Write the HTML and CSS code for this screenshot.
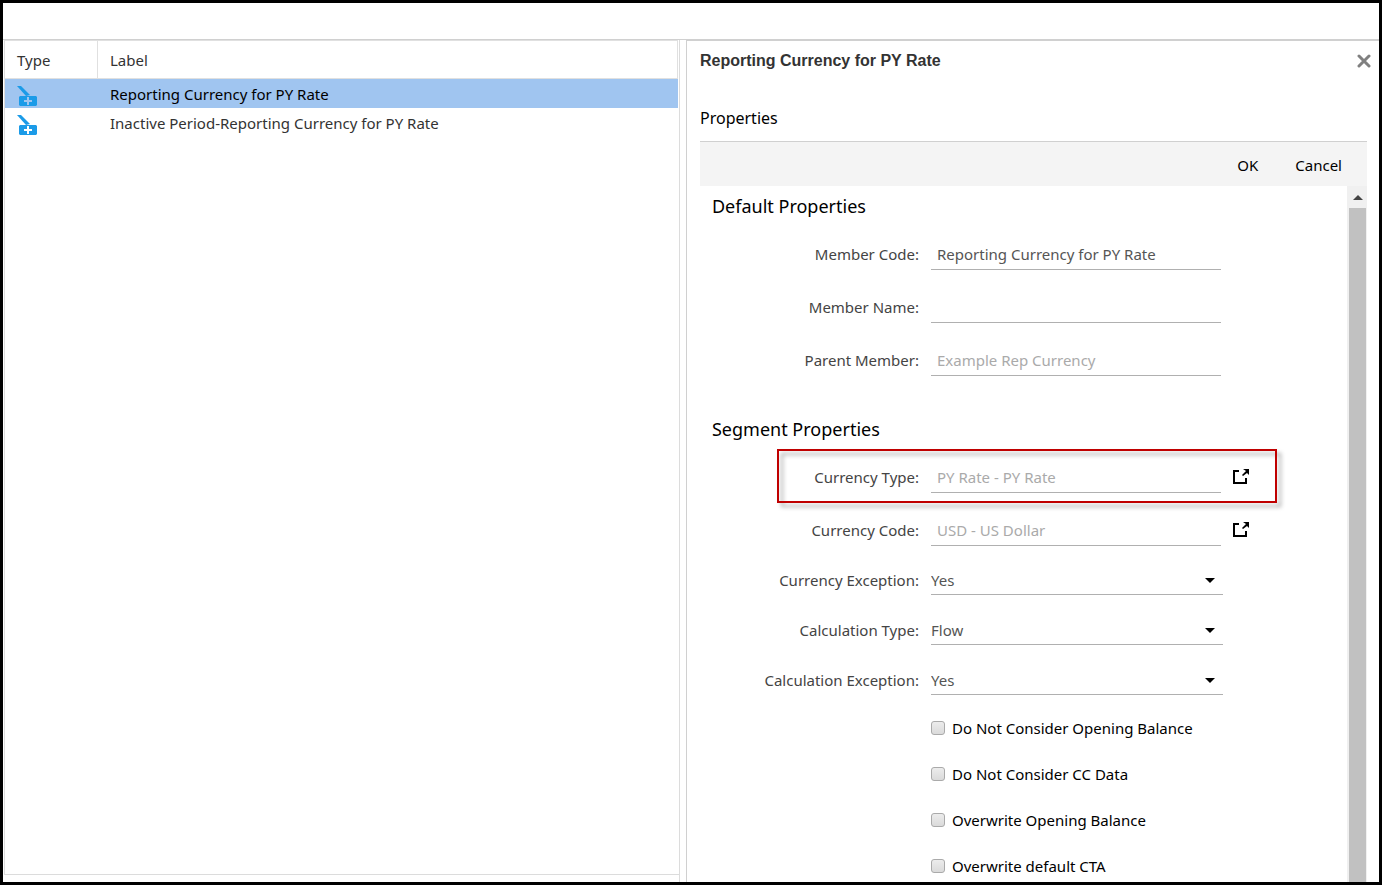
FILE: index.html
```
<!DOCTYPE html>
<html lang="en">
<head>
<meta charset="utf-8">
<title>Reporting Currency for PY Rate</title>
<link rel="stylesheet" href="styles.css">
</head>
<body>
<svg class="defs" aria-hidden="true">
  <symbol id="i-member" viewBox="0 0 20 20"><path d="M0 0h4l9 9-4 1z" fill="#1b9be8"/><path fill-rule="evenodd" d="M3 10h16l1 1v8l-1 1H3l-1-1v-8zM10 11v3H7v2h3v3h2v-3h3v-2h-3v-3z" fill="#1b9be8"/></symbol>
  <symbol id="i-open" viewBox="0 0 16 16"><path d="M6 2H1v12h12V9" fill="none" stroke="#000" stroke-width="2"/><path d="M10 0h6v6l-2-2-4 3-1-1 4-4z" fill="#000"/></symbol>
</svg>
<div class="window">
  <header class="topbar"></header>
  <main class="split">
    <section class="list">
      <div class="list-body">
        <table class="grid">
          <thead><tr><th class="type">Type</th><th>Label</th></tr></thead>
          <tbody>
            <tr class="selected"><td><svg class="member"><use href="#i-member"/></svg></td><td>Reporting Currency for PY Rate</td></tr>
            <tr><td><svg class="member"><use href="#i-member"/></svg></td><td>Inactive Period-Reporting Currency for PY Rate</td></tr>
          </tbody>
        </table>
      </div>
    </section>
    <section class="detail">
      <div class="titlebar">
        <h1>Reporting Currency for PY Rate</h1>
        <button class="close" type="button" aria-label="Close"><svg viewBox="0 0 14 14"><path d="M2 2l10 10M12 2L2 12" fill="none" stroke="#808080" stroke-width="3" stroke-linecap="round"/></svg></button>
      </div>
      <h2>Properties</h2>
      <div class="toolbar">
        <button type="button">OK</button>
        <button type="button">Cancel</button>
      </div>
      <div class="scroller">
        <form class="form">
          <h3>Default Properties</h3>
          <div class="fields">
            <div class="row"><label for="code">Member Code:</label><input id="code" type="text" value="Reporting Currency for PY Rate"></div>
            <div class="row"><label for="name">Member Name:</label><input id="name" type="text"></div>
            <div class="row"><label for="parent">Parent Member:</label><input id="parent" class="muted" type="text" value="Example Rep Currency" readonly></div>
          </div>
          <h3 class="next">Segment Properties</h3>
          <div class="fields">
            <div class="row marked"><label for="ctype">Currency Type:</label><input id="ctype" class="muted" type="text" value="PY Rate - PY Rate" readonly><button class="open" type="button" aria-label="Choose currency type"><svg><use href="#i-open"/></svg></button></div>
            <div class="row"><label for="ccode">Currency Code:</label><input id="ccode" class="muted" type="text" value="USD - US Dollar" readonly><button class="open" type="button" aria-label="Choose currency code"><svg><use href="#i-open"/></svg></button></div>
          </div>
          <div class="fields selects">
            <div class="row"><label for="cex">Currency Exception:</label><span class="pick"><select id="cex"><option>Yes</option><option>No</option></select></span></div>
            <div class="row"><label for="calc">Calculation Type:</label><span class="pick"><select id="calc"><option>Flow</option></select></span></div>
            <div class="row"><label for="calcex">Calculation Exception:</label><span class="pick"><select id="calcex"><option>Yes</option><option>No</option></select></span></div>
          </div>
          <div class="checks">
            <label><input type="checkbox">Do Not Consider Opening Balance</label>
            <label><input type="checkbox">Do Not Consider CC Data</label>
            <label><input type="checkbox">Overwrite Opening Balance</label>
            <label><input type="checkbox">Overwrite default CTA</label>
          </div>
        </form>
        <div class="scrollbar"><span class="up"></span><span class="thumb"></span></div>
      </div>
    </section>
  </main>
</div>
</body>
</html>
```
FILE: styles.css
```
*, *::before, *::after { box-sizing: border-box; }
body { margin: 0; font: 15px/20px "Noto Sans", sans-serif; color: #333; }
button, input, select { font: inherit; color: inherit; }
button { border: 0; background: none; padding: 0; cursor: pointer; }
h1, h2, h3 { margin: 0; font-weight: 400; color: #000; }
.defs { display: none; }
.window { height: 100vh; border: 3px solid #000; background: #fff; display: flex; flex-direction: column; overflow: hidden; }
.topbar { height: 37px; flex: none; border-bottom: 1px solid #d0d0d0; }
.split { flex: 1; min-height: 0; display: flex; gap: 6px; }
.list { flex: 0 0 49.2%; border-right: 1px solid #dcdcdc; padding: 0 0 7px 1px; display: flex; }
.list-body { flex: 1; border-left: 1px solid #dcdcdc; border-bottom: 1px solid #dcdcdc; padding-right: 1px; }
.grid { width: 100%; border-collapse: separate; border-spacing: 0; table-layout: fixed; }
.grid th { height: 39px; padding: 0 12px; text-align: left; font-weight: 400; border: solid #e0e0e0; border-width: 1px 1px 1px 0; }
.grid .type { width: 93px; }
.grid td { height: 29px; padding: 0 12px; }
.grid td:first-child { padding-top: 4px; }
.selected td { background: #a0c5f0; color: #000; }
.member { width: 20px; height: 20px; display: block; }
.detail { flex: 1; min-width: 0; border-left: 1px solid #d0d0d0; border-top: 1px solid #d0d0d0; padding: 0 12px 0 13px; display: flex; flex-direction: column; }
.titlebar { display: flex; justify-content: space-between; align-items: center; height: 40px; flex: none; margin-right: -4px; }
h1 { font: bold 16px/20px "Liberation Sans", Arial, sans-serif; color: #333; }
.close svg { width: 14px; height: 14px; display: block; }
h2 { font-size: 16px; line-height: 24px; margin: 25px 0 11px; }
.toolbar { height: 45px; flex: none; border-top: 1px solid #d0d0d0; background: #f4f4f4; display: flex; justify-content: flex-end; align-items: center; gap: 37px; padding: 2px 25px 0; }
.toolbar button { color: #000; }
.scroller { flex: 1; min-height: 0; display: flex; overflow: hidden; }
.form { flex: 1; padding-left: 12px; }
h3 { font-size: 18px; line-height: 40px; }
h3.next { margin-top: 33px; }
.fields { padding-top: 14px; display: flex; flex-direction: column; gap: 23px; }
.selects { padding-top: 19px; gap: 20px; }
.row { position: relative; display: grid; grid-template-columns: 207px 290px 18px; column-gap: 12px; align-items: center; }
.selects .row { grid-template-columns: 207px 292px; }
.row label { text-align: right; color: #444; padding-bottom: 3px; }
.selects .row label { padding-bottom: 0; }
.row input { width: 100%; height: 30px; border: 0; border-bottom: 1px solid #b0b0b0; padding: 0 6px 2px; color: #555; background: none; outline: 0; }
.row .muted { color: #aaa; }
.open { padding-bottom: 2px; }
.open svg { width: 16px; height: 16px; display: block; }
.marked::after { content: ""; position: absolute; left: 65px; top: -14px; width: 500px; height: 54px; border: 2px solid #c00000; filter: drop-shadow(4px 4px 2px rgba(0,0,0,.35)); pointer-events: none; }
.pick { position: relative; display: block; height: 30px; border-bottom: 1px solid #b0b0b0; }
.pick::after { content: ""; position: absolute; right: 8px; top: 13px; border: solid transparent; border-top-color: #000; border-width: 5px 5px 0; }
.pick select { appearance: none; width: 100%; height: 29px; padding: 0; border: 0; background: none; color: #555; outline: 0; }
.checks { margin: 10px 0 0 219px; }
.checks label { display: flex; align-items: center; gap: 7px; height: 46px; color: #000; }
.checks input { appearance: none; width: 14px; height: 14px; margin: 0; border: 1px solid #aaa; border-radius: 3px; background: linear-gradient(#ececec, #dadada); }
.scrollbar { width: 20px; background: #f0f0f0; display: flex; flex-direction: column; padding: 0 1px 0 2px; }
.up { height: 22px; flex: none; display: grid; place-items: center; }
.up::before { content: ""; border: solid transparent; border-bottom-color: #444; border-width: 0 5px 5px; }
.thumb { flex: 1; background: #c1c1c1; }
```
